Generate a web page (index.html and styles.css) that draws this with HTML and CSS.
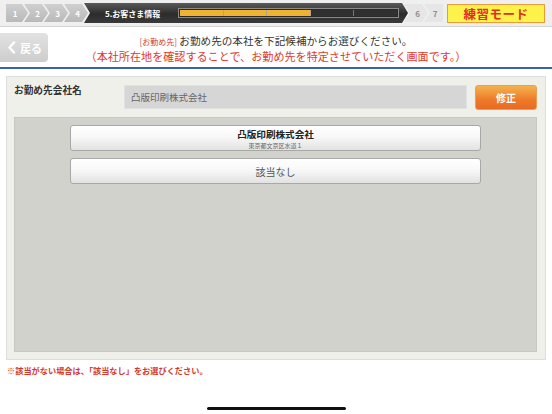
FILE: index.html
```html
<!DOCTYPE html>
<html lang="ja">
<head>
<meta charset="utf-8">
<link rel="stylesheet" href="styles.css">
</head>
<body>
<header class="topbar">
  <div class="steps">
    <div class="step done first">1</div>
    <div class="step done">2</div>
    <div class="step done">3</div>
    <div class="step done">4</div>
    <div class="step current">
      <span class="cur-label">5.お客さま情報</span>
      <div class="progress">
        <div class="seg fill"></div>
        <div class="seg fill"></div>
        <div class="seg fill"></div>
        <div class="seg"></div>
        <div class="seg"></div>
      </div>
    </div>
    <div class="step todo">6</div>
    <div class="step todo last">7</div>
  </div>
  <div class="practice">練習モード</div>
</header>

<section class="headrow">
  <button class="back">
    <svg width="9" height="13" viewBox="0 0 9 13"><path d="M7 1.5 L2.5 6.5 L7 11.5" fill="none" stroke="#fff" stroke-width="2.4" stroke-linecap="round" stroke-linejoin="round"/></svg>
    <span>戻る</span>
  </button>
  <div class="instructions">
    <p class="line1"><span class="tag">[お勤め先]</span> お勤め先の本社を下記候補からお選びください。</p>
    <p class="line2">（本社所在地を確認することで、お勤め先を特定させていただく画面です。）</p>
  </div>
</section>
<div class="rule"></div>

<main class="panel">
  <div class="field-row">
    <div class="label">お勤め先会社名</div>
    <div class="input">凸版印刷株式会社</div>
    <button class="edit">修正</button>
  </div>
  <div class="candidates">
    <button class="cand two">
      <span class="cand-title">凸版印刷株式会社</span>
      <span class="cand-sub">東京都文京区水道１</span>
    </button>
    <button class="cand none">該当なし</button>
  </div>
</main>

<p class="note">※該当がない場合は、「該当なし」をお選びください。</p>

<div class="home-indicator"></div>
</body>
</html>
```

FILE: styles.css
```css
* { box-sizing: border-box; }
html, body { margin: 0; padding: 0; }
body {
  width: 552px;
  height: 414px;
  background: #fff;
  font-family: "Noto Sans CJK JP", "Noto Sans", sans-serif;
  position: relative;
  overflow: hidden;
}
p { margin: 0; }
button { font-family: inherit; padding: 0; cursor: pointer; }

.topbar {
  height: 27px;
  background: #efefef;
  border-bottom: 1px solid #d4d4d4;
  display: flex;
  align-items: center;
  padding: 0 7px 0 6px;
}
.steps {
  display: flex;
  align-items: center;
  height: 20px;
}
.step {
  height: 18px;
  width: 24px;
  margin-left: -4px;
  display: flex;
  align-items: center;
  justify-content: center;
  font-size: 8px;
  font-weight: bold;
  padding-left: 3px;
  clip-path: polygon(0 0, calc(100% - 6px) 0, 100% 50%, calc(100% - 6px) 100%, 0 100%, 6px 50%);
}
.step.first {
  margin-left: 0;
  width: 22px;
  padding-left: 0;
  padding-right: 4px;
  clip-path: polygon(0 0, calc(100% - 6px) 0, 100% 50%, calc(100% - 6px) 100%, 0 100%);
}
.step.done {
  background: linear-gradient(#cfcfcf, #b9b9b9);
  color: #fff;
}
.step.current {
  width: 324px;
  height: 20px;
  background: linear-gradient(#5a5a5a, #2c2c2c 55%, #3a3a3a);
  color: #fff;
  justify-content: flex-start;
  padding-left: 21px;
}
.cur-label { font-size: 8px; font-weight: bold; white-space: nowrap; width: 73px; flex: none; }
.progress {
  display: flex;
  width: 221px;
  height: 10px;
  border: 1px solid #8a8a8a;
  background: #2a2a2a;
  padding: 1px;
}
.seg {
  flex: 1;
  border-right: 1px solid #777;
  background: #303030;
}
.seg:last-child { border-right: 0; }
.seg.fill { background: #f2b231; border-right-color: #b8a37a; }
.step.todo {
  background: #e6e6e6;
  color: #8e8e8e;
  width: 24px;
}
.step.todo.last {
  width: 19px;
  clip-path: polygon(0 0, 100% 0, 100% 100%, 0 100%, 6px 50%);
}
.practice {
  margin-left: auto;
  width: 98px;
  height: 19px;
  background: #fdf24a;
  border: 1px solid #ee9a3a;
  color: #e0301e;
  font-weight: bold;
  font-size: 12.5px;
  display: flex;
  align-items: center;
  justify-content: center;
  letter-spacing: 0.5px;
}

.headrow {
  display: flex;
  align-items: flex-start;
  height: 40px;
  padding-top: 6px;
}
.back {
  width: 48px;
  height: 29px;
  border: 0;
  border-radius: 0 4px 4px 0;
  background: linear-gradient(#e2e2e2, #cdcdcd);
  color: #fff;
  font-size: 11px;
  font-weight: bold;
  display: flex;
  align-items: center;
  gap: 4px;
  padding-left: 7px;
}
.instructions {
  flex: 1;
  margin-left: -48px;
  text-align: center;
}
.line1 { font-size: 10.6px; color: #333; line-height: 15px; }
.tag { font-size: 8px; color: #d23a2e; }
.line2 { font-size: 11.1px; color: #e0392c; line-height: 15px; }

.rule {
  height: 2px;
  background: #3b63ad;
}

.panel {
  margin: 7px 6px 0;
  height: 284px;
  background: #f0f0eb;
  border: 1px solid #dedede;
  padding: 8px 8px 7px 7px;
  display: flex;
  flex-direction: column;
}
.field-row {
  display: flex;
  align-items: flex-start;
  height: 32px;
}
.label {
  width: 110px;
  font-size: 9.7px;
  font-weight: bold;
  color: #333;
  line-height: 10px;
}
.input {
  width: 343px;
  height: 24px;
  background: #d6d6d6;
  border: 1px solid #e2e2e2;
  font-size: 9.5px;
  color: #666;
  display: flex;
  align-items: center;
  padding-left: 6px;
}
.edit {
  margin-left: 8px;
  width: 62px;
  height: 25px;
  border: 1px solid #e7a05a;
  border-radius: 3px;
  background: linear-gradient(#f5b24c, #ee7a2a 60%, #e96a22);
  color: #fff;
  font-size: 10px;
  font-weight: bold;
}
.candidates {
  flex: 1;
  background: #d2d2cc;
  border: 1px solid #c8c8c2;
  padding: 7px 55px;
  display: flex;
  flex-direction: column;
  gap: 7px;
}
.cand {
  height: 26px;
  border: 1px solid #a8a8a8;
  border-radius: 3px;
  background: linear-gradient(#ffffff, #f8f8f8 45%, #e2e2e2);
  display: flex;
  flex-direction: column;
  align-items: center;
  justify-content: center;
}
.cand-title { font-size: 9.6px; font-weight: bold; color: #222; line-height: 14px; display: block; }
.cand-sub { font-size: 6px; color: #666; line-height: 9px; display: block; }
.cand.none { font-size: 10px; color: #555; }

.note {
  margin: 4px 0 0 7px;
  font-size: 8.2px;
  font-weight: bold;
  color: #d4382c;
  line-height: 12px;
}

.home-indicator {
  position: absolute;
  left: 207px;
  top: 407px;
  width: 139px;
  height: 3px;
  border-radius: 2px;
  background: #111;
}
```
